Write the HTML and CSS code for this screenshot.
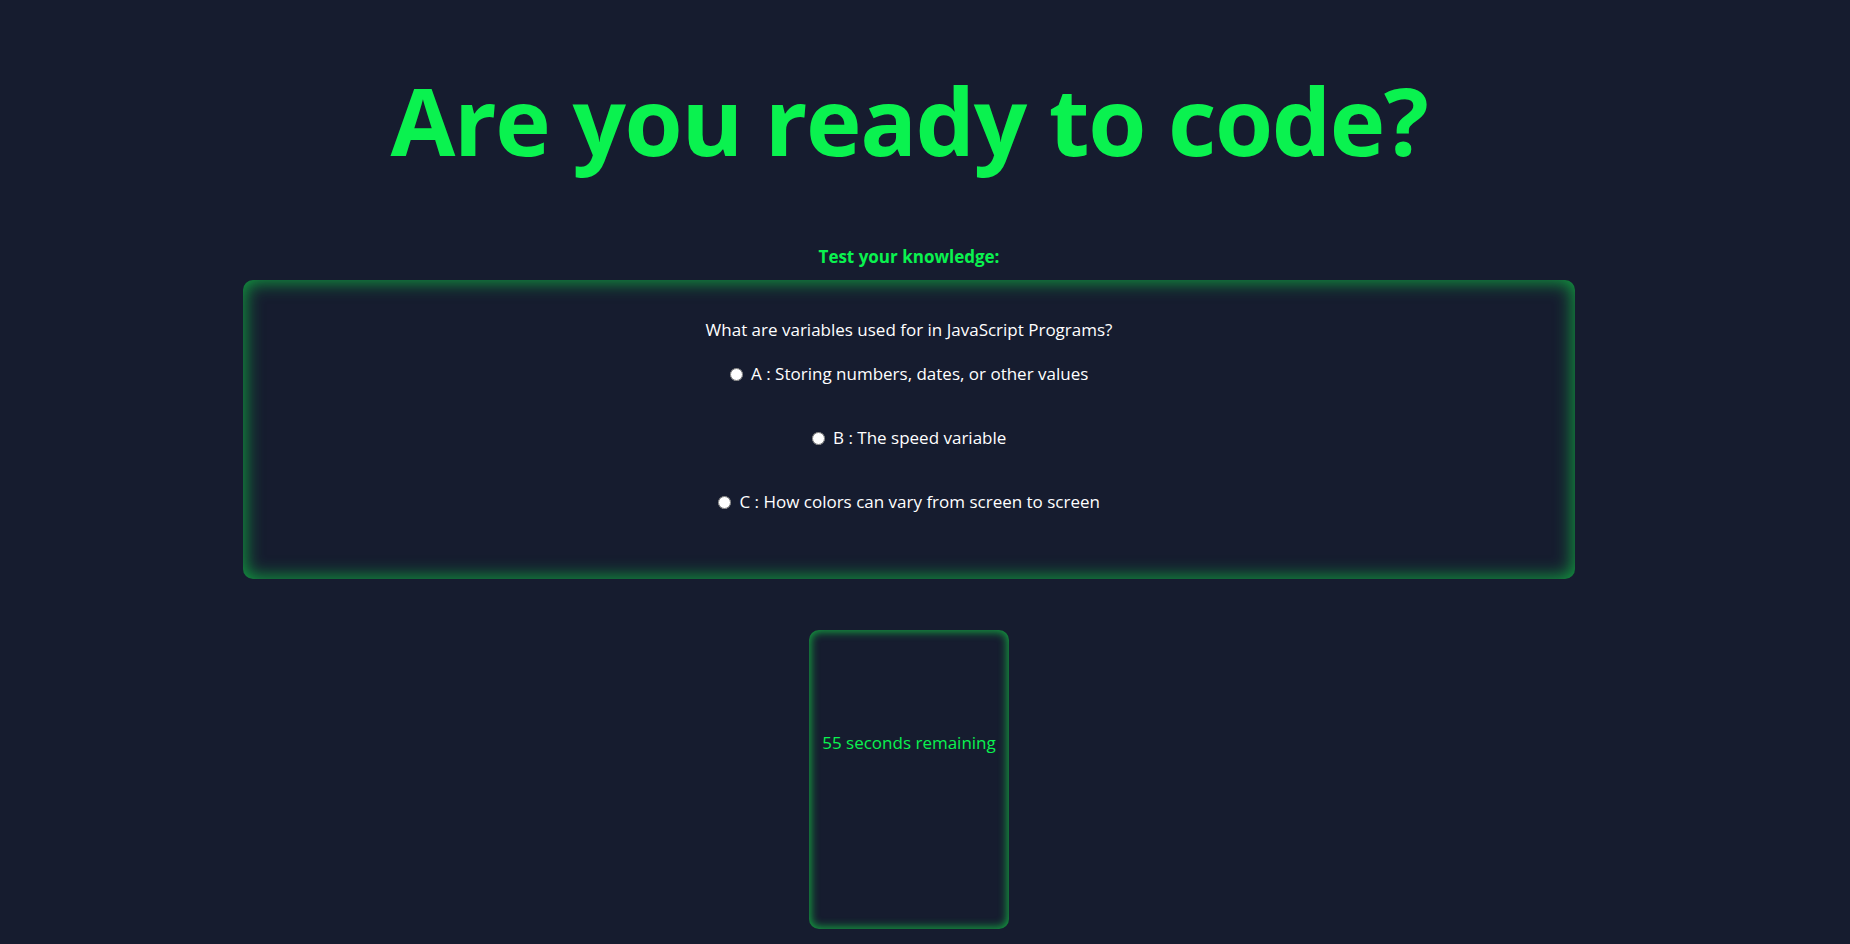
FILE: index.html
```html
<!DOCTYPE html>
<html lang="en">
<head>
<meta charset="utf-8">
<title>Are you ready to code?</title>
<link rel="stylesheet" href="styles.css">
</head>
<body>
<div class="page">
  <h1 class="title">Are you ready to code?</h1>
  <h4 class="label">Test your knowledge:</h4>
  <div class="quiz">
    <p class="question">What are variables used for in JavaScript Programs?</p>
    <label class="option"><input type="radio" name="q1" value="A"> A : Storing numbers, dates, or other values</label>
    <label class="option"><input type="radio" name="q1" value="B"> B : The speed variable</label>
    <label class="option"><input type="radio" name="q1" value="C"> C : How colors can vary from screen to screen</label>
  </div>
  <div class="timer">
    <p class="timer-text">55 seconds remaining</p>
  </div>
</div>
</body>
</html>
```
FILE: styles.css
```css
html, body {
  margin: 0;
  padding: 0;
  background: #161c2f;
}
body {
  font-family: "Open Sans", "Noto Sans", sans-serif;
  color: #ffffff;
  overflow: hidden;
}
.page {
  width: 1818px;
  display: flex;
  flex-direction: column;
  align-items: center;
}
.title {
  margin: 56px 0 0;
  font-size: 94px;
  line-height: 128px;
  font-weight: 700;
  color: #0af24f;
  letter-spacing: -1.4px;
}
.label {
  margin: 63px 0 0;
  font-size: 17px;
  line-height: 20px;
  font-weight: 700;
  color: #0af24f;
}
.quiz {
  margin-top: 13px;
  width: 1332px;
  height: 299px;
  box-sizing: border-box;
  border-radius: 10px;
  box-shadow: inset 0 0 18px 2px #12a040;
  display: flex;
  flex-direction: column;
  align-items: center;
  padding-top: 39px;
}
.question {
  margin: 0;
  font-size: 17px;
  line-height: 22px;
}
.option {
  margin-top: 22px;
  font-size: 17px;
  line-height: 22px;
}
.option + .option {
  margin-top: 42px;
}
.option input {
  margin: 0 4px 0 0;
  width: 13px;
  height: 13px;
  vertical-align: -1px;
}
.timer {
  margin-top: 51px;
  width: 200px;
  height: 299px;
  box-sizing: border-box;
  border-radius: 10px;
  box-shadow: inset 0 0 8px 2px #14a040;
  padding-top: 101px;
  display: flex;
  justify-content: center;
}
.timer-text {
  margin: 0;
  font-size: 17px;
  line-height: 24px;
  color: #0af24f;
}
```
